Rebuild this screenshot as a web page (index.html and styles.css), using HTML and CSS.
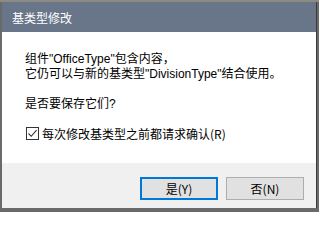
FILE: index.html
```html
<!DOCTYPE html>
<html lang="zh-CN">
<head>
<meta charset="utf-8">
<title>基类型修改</title>
<link rel="stylesheet" href="styles.css">
</head>
<body>
<div class="desk">
  <div class="window">
    <div class="titlebar">基类型修改</div>
    <div class="content">
      <p class="msg">组件"OfficeType"包含内容，<br>它仍可以与新的基类型"DivisionType"结合使用。</p>
      <p class="msg">是否要保存它们?</p>
      <label class="check">
        <span class="box"><svg width="11" height="11" viewBox="0 0 11 11"><path d="M1.5 5.5 L4.2 8.3 L9.6 2.2" fill="none" stroke="#333" stroke-width="1.1"/></svg></span>
        <span>每次修改基类型之前都请求确认(R)</span>
      </label>
    </div>
    <div class="footer">
      <button class="btn primary">是(Y)</button>
      <button class="btn">否(N)</button>
    </div>
  </div>
</div>
</body>
</html>
```
FILE: styles.css
```css
html, body {
  margin: 0;
  padding: 0;
}
body {
  width: 319px;
  height: 212px;
  overflow: hidden;
  font-family: "Noto Sans CJK SC", "Noto Sans", sans-serif;
  font-size: 12px;
}
.desk {
  box-sizing: border-box;
  height: 212px;
  background: #6a6a6a;
  border-top: 2px solid #8c8a82;
  padding-left: 2px;
}
.window {
  width: 314px;
  height: 206px;
  border-right: 1px solid #3a3a3a;
  display: flex;
  flex-direction: column;
}
.titlebar {
  height: 30px;
  background: #697689;
  color: #ffffff;
  display: flex;
  align-items: center;
  padding-left: 10px;
  line-height: 15px;
}
.content {
  flex: 1;
  background: #ffffff;
  padding: 20px 10px 0 23px;
  color: #000;
}
.msg {
  margin: 0 0 15px 0;
  line-height: 15px;
  white-space: nowrap;
  font-family: "Liberation Sans", "Noto Sans CJK SC", sans-serif;
}
.check {
  display: flex;
  align-items: center;
  gap: 3px;
  margin-top: -1px;
  line-height: 15px;
  white-space: nowrap;
}
.box {
  box-sizing: border-box;
  width: 13px;
  height: 13px;
  border: 1px solid #333333;
  background: #ffffff;
  display: flex;
  align-items: center;
  justify-content: center;
  margin-left: 1px;
}
.box svg {
  display: block;
}
.footer {
  height: 45px;
  background: #f0f0f0;
  display: flex;
  justify-content: flex-end;
  align-items: flex-start;
  gap: 8px;
  padding: 14px 12px 0 0;
  box-sizing: border-box;
}
.btn {
  box-sizing: border-box;
  width: 78px;
  height: 23px;
  margin: 0;
  padding: 0;
  font-family: "Noto Sans CJK SC", "Noto Sans", sans-serif;
  font-size: 12px;
  color: #000;
  background: #e1e1e1;
  border: 1px solid #adadad;
  border-radius: 0;
  line-height: 15px;
}
.btn.primary {
  border: 2px solid #0078d7;
}
```
